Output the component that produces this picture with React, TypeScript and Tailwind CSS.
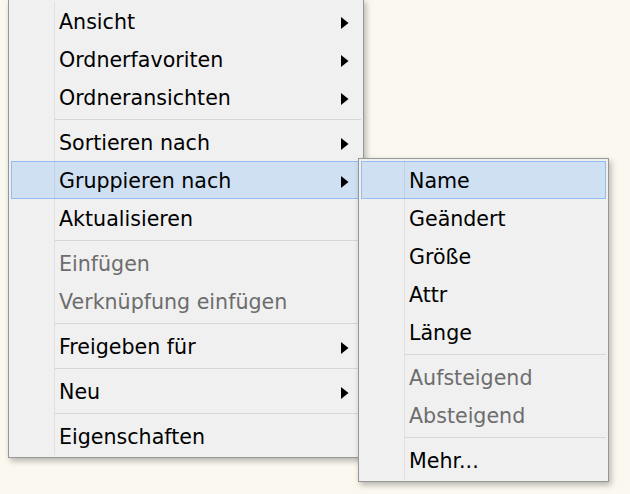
type Entry =
    | { kind: "item"; label: string; sub?: boolean; disabled?: boolean; active?: boolean }
    | { kind: "sep" };

const mainItems: Entry[] = [
    { kind: "item", label: "Ansicht", sub: true },
    { kind: "item", label: "Ordnerfavoriten", sub: true },
    { kind: "item", label: "Ordneransichten", sub: true },
    { kind: "sep" },
    { kind: "item", label: "Sortieren nach", sub: true },
    { kind: "item", label: "Gruppieren nach", sub: true, active: true },
    { kind: "item", label: "Aktualisieren" },
    { kind: "sep" },
    { kind: "item", label: "Einfügen", disabled: true },
    { kind: "item", label: "Verknüpfung einfügen", disabled: true },
    { kind: "sep" },
    { kind: "item", label: "Freigeben für", sub: true },
    { kind: "sep" },
    { kind: "item", label: "Neu", sub: true },
    { kind: "sep" },
    { kind: "item", label: "Eigenschaften" },
];

const groupItems: Entry[] = [
    { kind: "item", label: "Name", active: true },
    { kind: "item", label: "Geändert" },
    { kind: "item", label: "Größe" },
    { kind: "item", label: "Attr" },
    { kind: "item", label: "Länge" },
    { kind: "sep" },
    { kind: "item", label: "Aufsteigend", disabled: true },
    { kind: "item", label: "Absteigend", disabled: true },
    { kind: "sep" },
    { kind: "item", label: "Mehr..." },
];

function Arrow() {
    return (
        <svg className="ml-auto mr-[11px] mt-[1px]" width="8" height="12" viewBox="0 0 8 12">
            <polygon points="0,0 7.5,6 0,12" fill="#000" />
        </svg>
    );
}

function Menu({ items, className }: { items: Entry[]; className: string }) {
    return (
        <div
            className={`absolute box-border border border-[#979797] bg-[#f0f0f0] p-[2px] shadow-[2px_3px_6px_rgba(0,0,0,0.28)] ${className}`}
        >
            <div className="relative">
                {items.map((entry, i) =>
                    entry.kind === "sep" ? (
                        <div key={i} className="flex h-[7px] items-center pl-[44px]">
                            <div className="h-px w-full bg-[#d7d7d7]" />
                        </div>
                    ) : (
                        <div
                            key={i}
                            className={`flex h-[38px] items-center pl-[47px] pt-[2px] ${
                                entry.active
                                    ? "border border-[#92bdee] bg-[#cfe0f2]"
                                    : "border border-transparent"
                            } ${entry.disabled ? "text-[#6d6d6d]" : "text-black"}`}
                        >
                            <span className="leading-none">{entry.label}</span>
                            {entry.sub && <Arrow />}
                        </div>
                    ),
                )}
                <div className="pointer-events-none absolute bottom-0 left-[43px] top-0 w-px bg-[rgba(0,0,0,0.065)]" />
            </div>
        </div>
    );
}

export default function App() {
    return (
        <div
            className="relative h-[494px] w-[630px] overflow-hidden bg-[#fbf8ef] text-[20.6px]"
            style={{ fontFamily: '"DejaVu Sans", Verdana, sans-serif' }}
        >
            <Menu items={mainItems} className="left-[8px] top-[-1px] w-[356px]" />
            <Menu items={groupItems} className="left-[358px] top-[158px] w-[251px]" />
        </div>
    );
}
